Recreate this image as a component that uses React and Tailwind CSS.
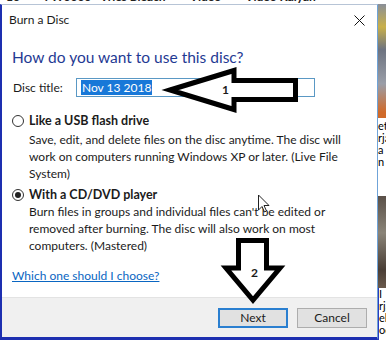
export default function App() {
  return (
    <div
      className="relative h-[340px] w-[386px] overflow-hidden bg-white text-[#1b1b1b]"
      style={{ fontFamily: '"Segoe UI", Lato, "Noto Sans", sans-serif' }}
    >
      {/* strip of the window behind, cut off at the top */}
      <div className="h-[4px] overflow-hidden">
        <div className="-mt-[10px] flex gap-6 pl-[6px] text-[12px] font-bold leading-[13px] text-[#222]">
          <span>10</span>
          <span>7W0000 · Vries Bleach</span>
          <span>Video</span>
          <span>Video Kalyan</span>
        </div>
      </div>

      <div className="flex h-[336px]">
        {/* dialog */}
        <div className="flex w-[378px] flex-col border-b-[3px] border-l-2 border-r border-t border-b-[#1d2fb0] border-l-[#1d2fb0] border-r-[#6fa3d8] border-t-[#b7c4d6] bg-white">
          <div className="flex h-[30px] shrink-0 items-center justify-between pl-[7px] pr-[12px]">
            <span className="text-[12px]">Burn a Disc</span>
            <svg width="11" height="11" viewBox="0 0 11 11">
              <path d="M0.5 0.5 L10.5 10.5 M10.5 0.5 L0.5 10.5" stroke="#111" strokeWidth="1" />
            </svg>
          </div>

          <div className="flex flex-1 flex-col pl-[10px] pr-[10px]">
            <h1 className="mt-[11px] text-[15.5px] leading-[22px] text-[#1f3a93]">How do you want to use this disc?</h1>

            <div className="mt-[10px] flex items-center">
              <label className="w-[64px] pl-[1px] text-[12px]">Disc title:</label>
              <div className="flex h-[19px] w-[239px] items-center border border-[#5a98c4] pl-[4px]">
                <span className="bg-[#1878d8] px-[1px] text-[12px] leading-[15px] text-white">Nov 13 2018</span>
              </div>
            </div>

            <div className="mt-[15px] flex items-center gap-[5px]">
              <span className="h-[12px] w-[12px] rounded-full border border-[#333] bg-white" />
              <span className="text-[12.5px] font-bold leading-[17px]">Like a USB flash drive</span>
            </div>
            <p className="mt-[2px] pl-[17px] text-[12px] leading-[17px]">
              Save, edit, and delete files on the disc anytime. The disc will work on computers running Windows XP or later. (Live File System)
            </p>

            <div className="mt-[4px] flex items-center gap-[5px]">
              <span className="flex h-[12px] w-[12px] items-center justify-center rounded-full border border-[#333] bg-white">
                <span className="h-[6px] w-[6px] rounded-full bg-[#222]" />
              </span>
              <span className="text-[12.5px] font-bold leading-[17px]">With a CD/DVD player</span>
            </div>
            <p className="pl-[17px] text-[12px] leading-[17px]">
              Burn files in groups and individual files can't be edited or removed after burning. The disc will also work on most computers. (Mastered)
            </p>

            <a className="mt-[13px] self-start text-[12px] leading-[17px] text-[#0a66c2] underline">Which one should I choose?</a>
          </div>

          <div className="flex h-[40px] shrink-0 items-center justify-end gap-[9px] border-t border-[#e3e3e3] bg-[#f0f0f0] pr-[10px]">
            <button className="h-[20px] w-[70px] border-2 border-[#2a7fd0] bg-[#e1e1e1] text-[12px] leading-none">Next</button>
            <button className="h-[20px] w-[70px] border border-[#adadad] bg-[#e1e1e1] text-[12px] leading-none">Cancel</button>
          </div>
        </div>

        {/* slice of the desktop behind the dialog */}
        <div className="flex w-[8px] flex-col text-[11px] leading-[12px] text-black">
          <div className="h-[114px] bg-[linear-gradient(180deg,#8a8f98_0%,#c9b04a_20%,#6d7380_40%,#9a9ea8_70%,#d06a2a_95%)]" />
          <div className="flex h-[78px] flex-col pt-[2px]">
            <span>et</span>
            <span>rja</span>
            <span>a</span>
            <span>n</span>
          </div>
          <div className="h-[92px] bg-[linear-gradient(180deg,#5a5048_0%,#8a8478_40%,#4a3e36_80%,#6a5a4c_100%)]" />
          <div className="flex flex-1 flex-col border-l border-[#2a3bbf]">
            <span>I</span>
            <span>rja</span>
            <span>ela</span>
            <span>od</span>
          </div>
        </div>
      </div>

      {/* annotations drawn over the dialog */}
      <svg className="pointer-events-none absolute left-0 top-0" width="386" height="340">
        <polygon
          points="170,90 234,70.5 234,80.5 295.5,80.5 295.5,99.5 234,99.5 234,109.5"
          fill="white"
          stroke="black"
          strokeWidth="5"
          strokeLinejoin="miter"
        />
        <polygon
          points="238.5,240.5 266.5,240.5 266.5,268 280,268 253,300 226,268 238.5,268"
          fill="white"
          stroke="black"
          strokeWidth="5"
          strokeLinejoin="miter"
        />
        <path d="M258.5 195 L258.5 210 L262 206.5 L264.5 212 L266.5 211 L264 205.5 L269 205.5 Z" fill="white" stroke="#222" strokeWidth="1" />
      </svg>
      <span className="absolute left-[222px] top-[82px] text-[12px] font-bold leading-[16px]">1</span>
      <span className="absolute left-[251px] top-[265px] text-[12px] font-bold leading-[16px]">2</span>
    </div>
  );
}
